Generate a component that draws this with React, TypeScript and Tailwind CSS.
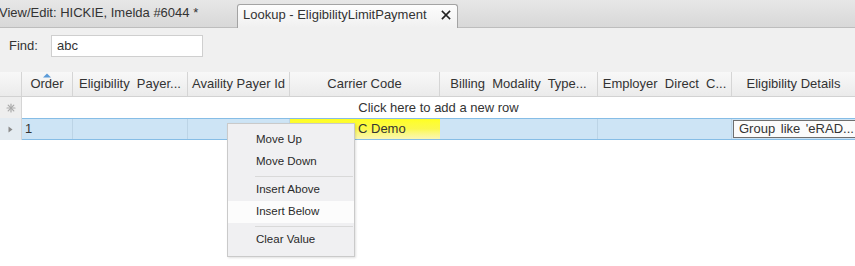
import React from "react";

const COLS = "grid grid-cols-[22px_51px_115px_102px_150px_158px_134px_123px]";

const headers = [
  "Order",
  "Eligibility  Payer...",
  "Availity Payer Id",
  "Carrier Code",
  "Billing  Modality  Type...",
  "Employer  Direct  C...",
  "Eligibility Details",
];

function CloseX() {
  return (
    <svg width="10" height="10" viewBox="0 0 10 10" className="block">
      <path d="M1.5 1.5 L8.5 8.5 M8.5 1.5 L1.5 8.5" stroke="#222" strokeWidth="1.7" strokeLinecap="square" />
    </svg>
  );
}

function Asterisk() {
  return (
    <svg width="10" height="10" viewBox="0 0 10 10" className="block">
      <g stroke="#a9a9a9" strokeWidth="1.2" strokeLinecap="round">
        <path d="M5 1 L5 9" />
        <path d="M1 5 L9 5" />
        <path d="M2.2 2.2 L7.8 7.8" />
        <path d="M7.8 2.2 L2.2 7.8" />
      </g>
    </svg>
  );
}

function MenuItem({ label, active }: { label: string; active?: boolean }) {
  return (
    <div className={"h-[22px] flex items-center pl-[28px] " + (active ? "bg-[#fcfcfc]" : "")}>
      {label}
    </div>
  );
}

function Sep() {
  return (
    <div className="h-[6px] flex items-center ml-[27px] mr-[1px]">
      <div className="h-px w-full bg-[#d9d9d9]" />
    </div>
  );
}

export default function App() {
  return (
    <div className="w-[855px] h-[266px] overflow-hidden relative bg-[#f0f0f0] text-[#333] font-['Liberation_Sans',Arial,sans-serif] text-[13px]">
      {/* tab strip */}
      <div className="h-[28px] flex items-end bg-gradient-to-b from-[#e7e7e7] to-[#d8d8d8] border-b border-[#bdbdbd]">
        <div className="h-full w-[238px] flex items-center -ml-[1px] pb-[1px] whitespace-nowrap">
          View/Edit: HICKIE, Imelda #6044 *
        </div>
        <div className="h-[24px] w-[221px] -mb-px flex items-center pl-[5px] pr-[6px] pb-[3px] bg-gradient-to-b from-[#fdfdfd] to-[#f0f0f0] border border-b-0 border-[#a3a3a3] rounded-t-[3px] whitespace-nowrap">
          <span>Lookup - EligibilityLimitPayment</span>
          <span className="ml-auto">
            <CloseX />
          </span>
        </div>
      </div>

      {/* find bar */}
      <div className="h-[44px] flex items-start pt-[7px] pl-[9px]">
        <div className="w-[42px] h-[22px] flex items-center">Find:</div>
        <div className="w-[152px] h-[22px] bg-white border border-[#cfcfcf] flex items-center pl-[5px]">abc</div>
      </div>

      {/* grid */}
      <div className="bg-white h-[194px]">
        {/* header */}
        <div className={COLS + " h-[25px] bg-gradient-to-b from-[#f8f8f8] to-[#ebebeb] border-b border-[#d2d2d2]"}>
          <div className="border-r border-[#d5d5d5]" />
          {headers.map((h, i) => (
            <div
              key={h}
              className={
                "relative flex items-center justify-center whitespace-pre overflow-hidden " +
                (i < headers.length - 1 ? "border-r border-[#d5d5d5]" : "")
              }
            >
              {i === 0 && (
                <svg width="8" height="5" viewBox="0 0 8 5" className="absolute top-[1px] left-[21px]">
                  <path d="M0 4.5 L4 0.5 L8 4.5 Z" fill="#5b9bd8" />
                </svg>
              )}
              {h}
            </div>
          ))}
        </div>

        {/* new row */}
        <div className="flex h-[21px]">
          <div className="w-[22px] bg-[#eeeeee] border-r border-[#d5d5d5] flex items-center justify-center">
            <Asterisk />
          </div>
          <div className="flex-1 flex items-center justify-center">Click here to add a new row</div>
        </div>

        {/* data row */}
        <div className="flex h-[22px]">
          <div className="w-[22px] bg-[#e4ebf1] border-r border-[#d5d5d5] flex items-center justify-center">
            <svg width="5" height="7" viewBox="0 0 5 7" className="block">
              <path d="M0.5 0.5 L4.5 3.5 L0.5 6.5 Z" fill="#8a8a8a" />
            </svg>
          </div>
          <div className="flex-1 overflow-hidden border-y border-[#86bde6] bg-[#cde4f5]">
            <div className="grid grid-cols-[51px_115px_102px_150px_158px_134px_123px] h-full">
              <div className="border-r border-[#bcd4e6] flex items-center pl-[3px]">1</div>
              <div className="border-r border-[#bcd4e6]" />
              <div className="border-r border-[#bcd4e6]" />
              <div className="bg-gradient-to-b from-[#ffff1e] via-[#fbf84a] to-[#fbf6b2] flex items-center pl-[68px] whitespace-nowrap">
                C Demo
              </div>
              <div className="border-r border-[#bcd4e6]" />
              <div className="border-r border-[#bcd4e6]" />
              <div className="flex items-center pl-[1px]">
                <div className="h-[18px] w-full bg-[#fbfbfb] border border-r-0 border-[#6f6f6f] flex items-center pl-[5px] whitespace-nowrap [word-spacing:2px]">
                  Group like 'eRAD...
                </div>
              </div>
            </div>
          </div>
        </div>
      </div>

      {/* context menu */}
      <div className="absolute left-[227px] top-[123px] w-[128px] h-[134px] bg-[#f0f0f2] border border-[#cacaca] shadow-[1px_1px_2px_rgba(0,0,0,0.12)] pt-[5px] text-[11.5px] text-[#2a2a2a]">
        <MenuItem label="Move Up" />
        <MenuItem label="Move Down" />
        <Sep />
        <MenuItem label="Insert Above" />
        <MenuItem label="Insert Below" active />
        <Sep />
        <MenuItem label="Clear Value" />
      </div>
    </div>
  );
}
